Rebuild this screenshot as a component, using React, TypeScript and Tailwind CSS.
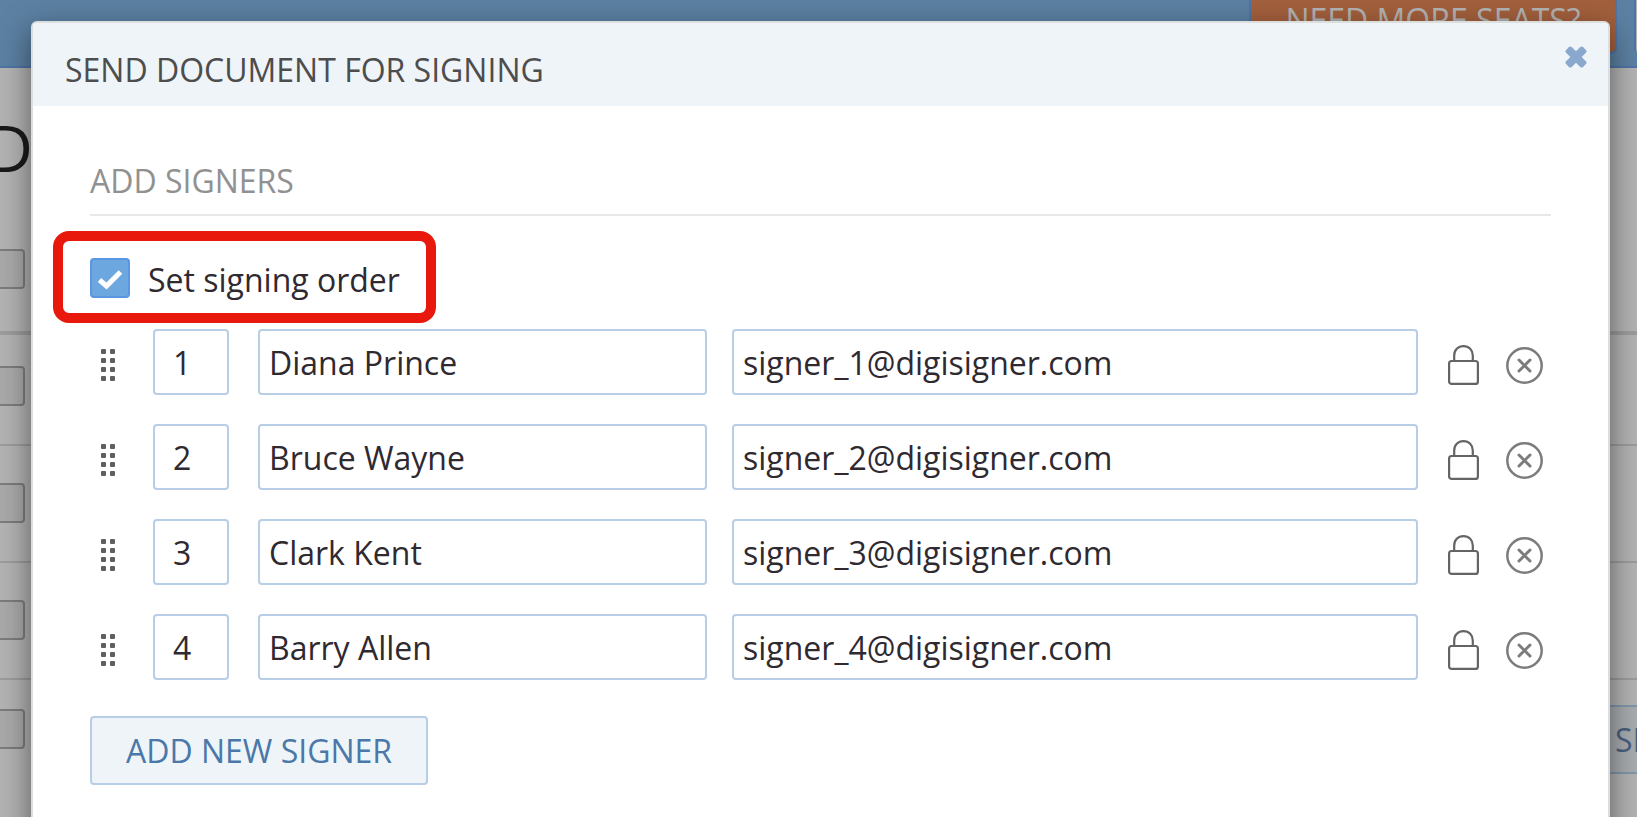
import { useState } from 'react'

const initialSigners = [
  { name: 'Diana Prince', email: 'signer_1@digisigner.com' },
  { name: 'Bruce Wayne', email: 'signer_2@digisigner.com' },
  { name: 'Clark Kent', email: 'signer_3@digisigner.com' },
  { name: 'Barry Allen', email: 'signer_4@digisigner.com' },
]

const fieldClass =
  'h-[66px] w-full min-w-0 rounded border-2 border-[#b8cde6] bg-white text-[32px] text-[#2f2930] outline-none'

function CloseIcon() {
  return (
    <svg className="h-[22px] w-[22px]" viewBox="0 0 22 22" fill="#8aa8cd">
      <rect x="-1" y="7" width="24" height="8" rx="2" transform="rotate(45 11 11)" />
      <rect x="-1" y="7" width="24" height="8" rx="2" transform="rotate(-45 11 11)" />
    </svg>
  )
}

function GripIcon() {
  return (
    <svg className="h-8 w-[14px]" viewBox="0 0 14 32" fill="#5f5f5f">
      {[0, 9, 18, 27].map((y) => (
        <g key={y}>
          <rect x="0" y={y} width="5" height="5" rx="1" />
          <rect x="9" y={y} width="5" height="5" rx="1" />
        </g>
      ))}
    </svg>
  )
}

function LockIcon() {
  return (
    <svg className="h-10 w-[31px]" viewBox="0 0 31 40" fill="none" stroke="#646464" strokeWidth="2.2">
      <rect x="1.1" y="16" width="28.8" height="22.9" rx="2.5" />
      <path d="M6.2 16 V10.5 C6.200 5 10 1.200 15.500 1.200 C21 1.200 24.800 5 24.800 10.500 V16" />
    </svg>
  )
}

function RemoveIcon() {
  return (
    <svg className="h-[37px] w-[37px]" viewBox="0 0 37 37" fill="none" stroke="#7c7c7c">
      <circle cx="18.5" cy="18.5" r="17.2" strokeWidth="2.5" />
      <path d="M13 13 L24 24 M24 13 L13 24" strokeWidth="3" strokeLinecap="round" />
    </svg>
  )
}

function RowCheckbox() {
  return (
    <input
      type="checkbox"
      aria-label="Select document"
      className="-ml-4 h-10 w-[41px] appearance-none rounded border-2 border-[#7c7c7c] bg-[#a9a9a9]"
    />
  )
}

// Dimmed documents page behind the dialog
function DocumentsPage() {
  return (
    <div className="h-full bg-[#b3b3b3]">
      <header className="flex h-[68px] items-start justify-end gap-[17px] border-b-2 border-[#4e74a6] bg-[#5c81a3]">
        <button className="h-[54px] w-[368px] rounded-b-md border-x-2 border-b-2 border-[#4e74a6] bg-[#a3603d] pb-3 text-[32px] leading-9 text-[#b3b3b3]">
          NEED MORE SEATS?
        </button>
        <div className="h-[52px] w-[3px] rounded-bl border-l-2 border-[#4e74a6] bg-[#b3b3b3]" />
      </header>

      <h1 className="flex h-[160px] w-[33px] justify-end overflow-hidden pt-[36px] text-[64px] leading-[88px] text-[#1a1a1a]">
        D
      </h1>

      <div className="flex h-[107px] items-start border-b-4 border-[#9c9c9c] pt-[21px]">
        <RowCheckbox />
      </div>
      <div>
        {[0, 1, 2].map((row) => (
          <div key={row} className="flex h-[117px] items-end border-b-2 border-[#9c9c9c] pb-[38px] first:h-[111px]">
            <RowCheckbox />
          </div>
        ))}
      </div>
      <div className="flex items-start justify-between pt-[25px]">
        <div className="pt-1">
          <RowCheckbox />
        </div>
        <button className="h-[69px] w-[60px] overflow-hidden border-y-2 border-[#8296ab] bg-[#a8acaf] pl-[38px] text-left text-[32px] text-[#4a6080]">
          SIGN
        </button>
      </div>
    </div>
  )
}

export default function App() {
  const [ordered, setOrdered] = useState(true)
  const [signers, setSigners] = useState(initialSigners)

  const updateSigner = (index: number, key: 'name' | 'email', value: string) => {
    setSigners(signers.map((s, i) => (i === index ? { ...s, [key]: value } : s)))
  }

  return (
    <div className="relative h-screen overflow-hidden font-['Open_Sans',sans-serif]">
      <DocumentsPage />

      <div
        role="dialog"
        aria-labelledby="dialog-title"
        className="absolute inset-x-0 top-[21px] -bottom-10 mr-[27px] ml-[31px] rounded-md border-2 border-[#dcdddd] bg-white shadow-[0_10px_30px_rgba(0,0,0,0.5)]"
      >
        <div className="flex h-[83px] items-start justify-between rounded-t bg-[#eff4f9] pr-[21px] pl-8">
          <h2 id="dialog-title" className="pt-[25px] text-[32px] leading-11 text-[#4d4d4d]">
            SEND DOCUMENT FOR SIGNING
          </h2>
          <button aria-label="Close" className="pt-[23px]">
            <CloseIcon />
          </button>
        </div>

        <div className="px-[57px] pt-[53px]">
          <h3 className="border-b-2 border-[#e8e8e8] pb-[11px] text-[32px] leading-11 text-[#919191]">ADD SIGNERS</h3>

          <div className="mt-[15px] -ml-[37px] flex h-[92px] w-[383px] items-center rounded-2xl border-10 border-[#e8180c] pt-0.5 pl-[27px]">
            <label className="flex items-center gap-[18px] text-[32px] leading-11 text-[#2f2930]">
              <span className="relative h-10 w-10">
                <input
                  type="checkbox"
                  checked={ordered}
                  onChange={(e) => setOrdered(e.target.checked)}
                  className="block h-10 w-10 appearance-none rounded border-2 border-[#5b96e3] bg-[#6ca8df]"
                />
                {ordered && (
                  <svg className="pointer-events-none absolute inset-0" viewBox="0 0 40 40" fill="none" stroke="#fff" strokeWidth="5">
                    <path d="M9.500 22 L16.500 28 L30.500 14" />
                  </svg>
                )}
              </span>
              <span className="pt-1">Set signing order</span>
            </label>
          </div>

          <ul className="mt-1.5 flex flex-col gap-[29px]">
            {signers.map((signer, i) => (
              <li key={i} className="flex items-center">
                <span className="mt-1.5 mr-[38px] ml-[11px] cursor-move">
                  <GripIcon />
                </span>
                <div className="w-[76px]">
                  <input
                    aria-label={`Order of signer ${i + 1}`}
                    defaultValue={i + 1}
                    className={`${fieldClass} pl-[18px]`}
                  />
                </div>
                <div className="ml-[29px] grid flex-1 grid-cols-[449fr_686fr] gap-[25px]">
                  <input
                    aria-label={`Name of signer ${i + 1}`}
                    value={signer.name}
                    onChange={(e) => updateSigner(i, 'name', e.target.value)}
                    className={`${fieldClass} px-[9px]`}
                  />
                  <input
                    aria-label={`Email of signer ${i + 1}`}
                    value={signer.email}
                    onChange={(e) => updateSigner(i, 'email', e.target.value)}
                    className={`${fieldClass} px-[9px]`}
                  />
                </div>
                <button aria-label="Authentication" className="mt-1.5 ml-[30px]">
                  <LockIcon />
                </button>
                <button aria-label="Remove signer" className="mt-1.5 mr-2 ml-[27px]">
                  <RemoveIcon />
                </button>
              </li>
            ))}
          </ul>

          <button
            onClick={() => setSigners([...signers, { name: '', email: '' }])}
            className="mt-9 h-[69px] min-w-[338px] rounded border-2 border-[#b8cde6] bg-[#eff4f9] px-8 text-[32px] text-[#4a78a8]"
          >
            ADD NEW SIGNER
          </button>
        </div>
      </div>
    </div>
  )
}
